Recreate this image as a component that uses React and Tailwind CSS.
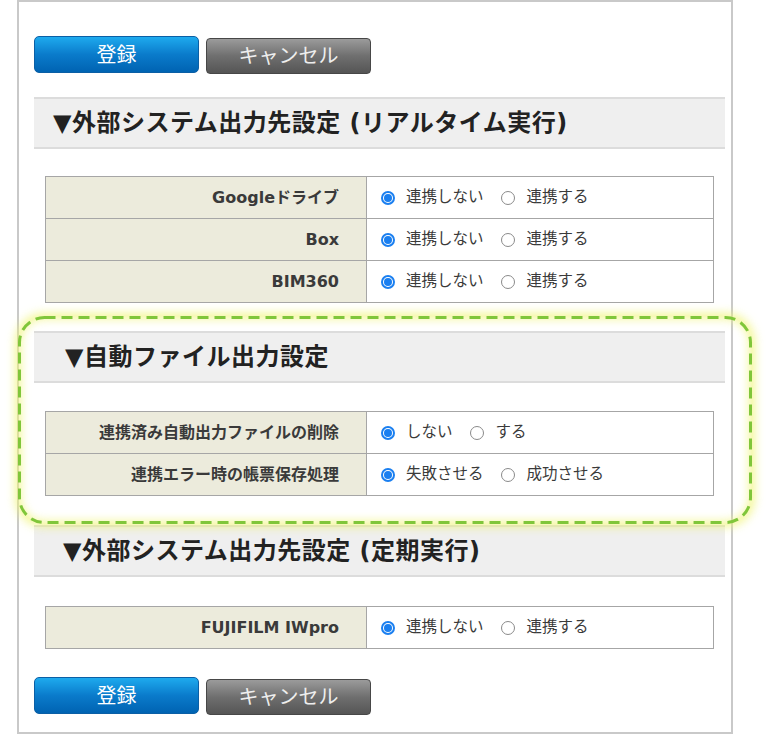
import React from 'react';

const rows1 = [
  { label: 'Googleドライブ', on: '連携しない', off: '連携する' },
  { label: 'Box', on: '連携しない', off: '連携する' },
  { label: 'BIM360', on: '連携しない', off: '連携する' },
];

const rows2 = [
  { label: '連携済み自動出力ファイルの削除', on: 'しない', off: 'する' },
  { label: '連携エラー時の帳票保存処理', on: '失敗させる', off: '成功させる' },
];

const rows3 = [{ label: 'FUJIFILM IWpro', on: '連携しない', off: '連携する' }];

function Radio({ checked, className = '' }) {
  return checked ? (
    <span className={`flex h-[14px] w-[14px] shrink-0 items-center justify-center rounded-full border-2 border-[#1a7ff0] bg-white ${className}`}>
      <span className="h-[8px] w-[8px] rounded-full bg-[#1a7ff0]" />
    </span>
  ) : (
    <span className={`block h-[14px] w-[14px] shrink-0 rounded-full border border-[#8a8a8a] bg-white ${className}`} />
  );
}

function Buttons() {
  return (
    <div className="flex gap-[7px]">
      <button className="h-[37px] w-[165px] rounded-[5px] border border-[#0b5fa5] bg-[linear-gradient(#1eaaee,#0a7bcb_50%,#0063b2)] text-[20px] text-white">
        登録
      </button>
      <button className="mt-[2px] h-[36px] w-[165px] rounded-[4px] border border-[#474747] bg-[linear-gradient(#9b9b9b,#6f6f6f_50%,#555555)] text-[20px] text-[#eeeeee]">
        キャンセル
      </button>
    </div>
  );
}

function Header({ children, pl }) {
  return (
    <div className={`flex h-[52px] items-center border-y-2 border-[#dcdcdc] bg-[#efefef] text-[24px] font-bold tracking-[0.5px] text-[#222222] ${pl}`}>
      {children}
    </div>
  );
}

function SettingTable({ rows }) {
  return (
    <div className="px-[11px]">
      <table className="w-full border-collapse">
        <tbody>
          {rows.map((r) => (
            <tr key={r.label}>
              <td className="h-[42px] w-[321px] border border-[#a6a6a6] bg-[#ecebdc] pr-[27px] text-right text-[16px] font-bold text-[#3a3a3a]">
                {r.label}
              </td>
              <td className="h-[42px] border border-[#a6a6a6] bg-white pl-[14px] text-[15.5px] text-[#3a3a3a]">
                <div className="flex items-center pt-[1px]">
                  <Radio checked />
                  <span className="ml-[11px]">{r.on}</span>
                  <Radio className="ml-[17px]" />
                  <span className="ml-[12px]">{r.off}</span>
                </div>
              </td>
            </tr>
          ))}
        </tbody>
      </table>
    </div>
  );
}

export default function App() {
  return (
    <div className="relative h-[735px] w-[770px] bg-white font-['DejaVu_Sans','Noto_Sans_CJK_JP',sans-serif]">
      <div className="ml-[17px] h-[734px] w-[716px] border-2 border-[#c9c9c9] pl-[15px] pr-[6px] pt-[34px]">
        <Buttons />
        <div className="mt-[23px]">
          <Header pl="pl-[19px]">▼外部システム出力先設定 (リアルタイム実行)</Header>
        </div>
        <div className="mt-[27px]">
          <SettingTable rows={rows1} />
        </div>
        <div className="mt-[28px]">
          <Header pl="pl-[31px]">▼自動ファイル出力設定</Header>
        </div>
        <div className="mt-[28px]">
          <SettingTable rows={rows2} />
        </div>
        <div className="mt-[29px]">
          <Header pl="pl-[29px]">▼外部システム出力先設定 (定期実行)</Header>
        </div>
        <div className="mt-[29px]">
          <SettingTable rows={rows3} />
        </div>
        <div className="mt-[28px]">
          <Buttons />
        </div>
      </div>

      {/* highlight around the auto output block */}
      <div className="pointer-events-none absolute left-[18px] top-[316px] h-[208px] w-[734px] rounded-[26px] shadow-[0_0_10px_3px_rgba(240,244,120,0.75),inset_0_0_10px_3px_rgba(240,244,120,0.75)]">
        <svg width="734" height="208" className="block">
          <rect x="1.5" y="1.5" width="731" height="205" rx="25" ry="25" fill="none" stroke="#80c63a" strokeWidth="3" strokeDasharray="11 6" />
        </svg>
      </div>
    </div>
  );
}
